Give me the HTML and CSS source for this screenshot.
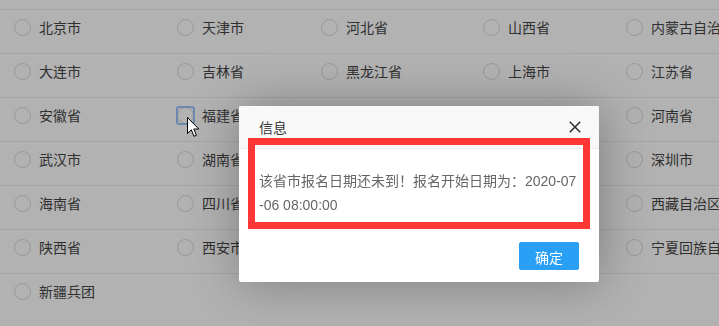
FILE: index.html
```html
<!DOCTYPE html>
<html lang="zh-CN">
<head>
<meta charset="utf-8">
<title>报名</title>
<link rel="stylesheet" href="styles.css">
</head>
<body>
<div class="page">
  <div class="row">
    <label class="item"><span class="radio"></span><span class="name">北京市</span></label>
    <label class="item"><span class="radio"></span><span class="name">天津市</span></label>
    <label class="item"><span class="radio"></span><span class="name">河北省</span></label>
    <label class="item"><span class="radio"></span><span class="name">山西省</span></label>
    <label class="item"><span class="radio"></span><span class="name">内蒙古自治区</span></label>
  </div>
  <div class="row">
    <label class="item"><span class="radio"></span><span class="name">大连市</span></label>
    <label class="item"><span class="radio"></span><span class="name">吉林省</span></label>
    <label class="item"><span class="radio"></span><span class="name">黑龙江省</span></label>
    <label class="item"><span class="radio"></span><span class="name">上海市</span></label>
    <label class="item"><span class="radio"></span><span class="name">江苏省</span></label>
  </div>
  <div class="row">
    <label class="item"><span class="radio"></span><span class="name">安徽省</span></label>
    <label class="item"><span class="radio radio-focus"></span><span class="name">福建省</span></label>
    <label class="item"><span class="radio"></span><span class="name">江西省</span></label>
    <label class="item"><span class="radio"></span><span class="name">山东省</span></label>
    <label class="item"><span class="radio"></span><span class="name">河南省</span></label>
  </div>
  <div class="row">
    <label class="item"><span class="radio"></span><span class="name">武汉市</span></label>
    <label class="item"><span class="radio"></span><span class="name">湖南省</span></label>
    <label class="item"><span class="radio"></span><span class="name">广东省</span></label>
    <label class="item"><span class="radio"></span><span class="name">重庆市</span></label>
    <label class="item"><span class="radio"></span><span class="name">深圳市</span></label>
  </div>
  <div class="row">
    <label class="item"><span class="radio"></span><span class="name">海南省</span></label>
    <label class="item"><span class="radio"></span><span class="name">四川省</span></label>
    <label class="item"><span class="radio"></span><span class="name">贵州省</span></label>
    <label class="item"><span class="radio"></span><span class="name">云南省</span></label>
    <label class="item"><span class="radio"></span><span class="name">西藏自治区</span></label>
  </div>
  <div class="row">
    <label class="item"><span class="radio"></span><span class="name">陕西省</span></label>
    <label class="item"><span class="radio"></span><span class="name">西安市</span></label>
    <label class="item"><span class="radio"></span><span class="name">甘肃省</span></label>
    <label class="item"><span class="radio"></span><span class="name">青海省</span></label>
    <label class="item"><span class="radio"></span><span class="name">宁夏回族自治区</span></label>
  </div>
  <div class="row row-last">
    <label class="item"><span class="radio"></span><span class="name">新疆兵团</span></label>
  </div>
</div>

<div class="shade"></div>

<div class="layer">
  <div class="layer-title">信息
    <span class="layer-close">
      <svg width="12" height="12" viewBox="0 0 12 12"><path d="M0.8 0.8 L11.2 11.2 M11.2 0.8 L0.8 11.2" stroke="#2b2b2b" stroke-width="1.5" fill="none"/></svg>
    </span>
  </div>
  <div class="layer-content">该省市报名日期还未到！报名开始日期为：2020-07-06 08:00:00</div>
  <div class="layer-btns"><a class="layer-btn">确定</a></div>
</div>

<div class="mark"></div>

<svg class="cursor" width="13" height="21" viewBox="0 0 13 21">
  <path d="M0.5 0.5 L0.5 16.5 L4.3 12.8 L7 19.3 L9.4 18.3 L6.8 12 L11.8 12 Z" fill="#fff" stroke="#000" stroke-width="1" stroke-linejoin="miter"/>
</svg>
</body>
</html>
```

FILE: styles.css
```css
html, body {
  margin: 0;
  padding: 0;
  background: #fff;
  overflow: hidden;
  height: 326px;
}

body {
  font-family: "Noto Sans CJK SC", "Liberation Sans", sans-serif;
  font-size: 14px;
  color: #333;
}

.page {
  padding-top: 9px;
  width: 760px;
}

.row {
  display: grid;
  grid-template-columns: 163px 144px 162px 143px 1fr;
  padding-left: 14px;
  height: 44px;
  box-sizing: border-box;
  border-top: 1px solid #ececec;
  padding-top: 7px;
  align-items: start;
}

.row-last {
  height: 60px;
}

.item {
  display: flex;
  align-items: center;
  gap: 8px;
  height: 20px;
  white-space: nowrap;
  color: #464646;
}

.radio {
  width: 15px;
  height: 15px;
  border: 1px solid #d9d9d9;
  border-radius: 50%;
  flex: none;
  position: relative;
}

.radio-focus::after {
  content: "";
  position: absolute;
  left: -2px;
  top: -2px;
  width: 15px;
  height: 15px;
  border: 2px solid #9ec3ff;
  border-radius: 3px;
}

.name {
  line-height: 20px;
}

.shade {
  position: fixed;
  inset: 0;
  background: rgba(0, 0, 0, 0.3);
}

.layer {
  position: absolute;
  left: 239px;
  top: 106px;
  width: 360px;
  background: #fff;
  box-shadow: 1px 1px 50px rgba(0, 0, 0, 0.3);
  border-radius: 2px;
}

.layer-title {
  position: relative;
  height: 42px;
  line-height: 42px;
  padding: 0 80px 0 20px;
  background: #f8f8f8;
  border-bottom: 1px solid #eee;
  color: #333;
  font-size: 14px;
  border-radius: 2px 2px 0 0;
}

.layer-close {
  position: absolute;
  right: 18px;
  top: 15px;
  width: 12px;
  height: 12px;
  display: flex;
}

.layer-content {
  padding: 20px;
  line-height: 24px;
  color: #666;
  font-family: "Liberation Sans", "Noto Sans CJK SC", sans-serif;
  word-break: break-all;
}

.layer-btns {
  text-align: right;
  padding: 0 15px 12px;
}

.layer-btn {
  display: inline-block;
  height: 28px;
  line-height: 28px;
  margin: 5px 5px 0;
  padding: 0 15px;
  border: 1px solid #2a9ff6;
  background: #2a9ff6;
  color: #fff;
  border-radius: 2px;
  font-size: 14px;
  box-sizing: border-box;
  width: 60px;
  text-align: center;
}

.mark {
  position: absolute;
  left: 248px;
  top: 138px;
  width: 342px;
  height: 91px;
  box-sizing: border-box;
  border: 7px solid #fe3636;
}

.cursor {
  position: absolute;
  left: 187px;
  top: 117px;
}
```
